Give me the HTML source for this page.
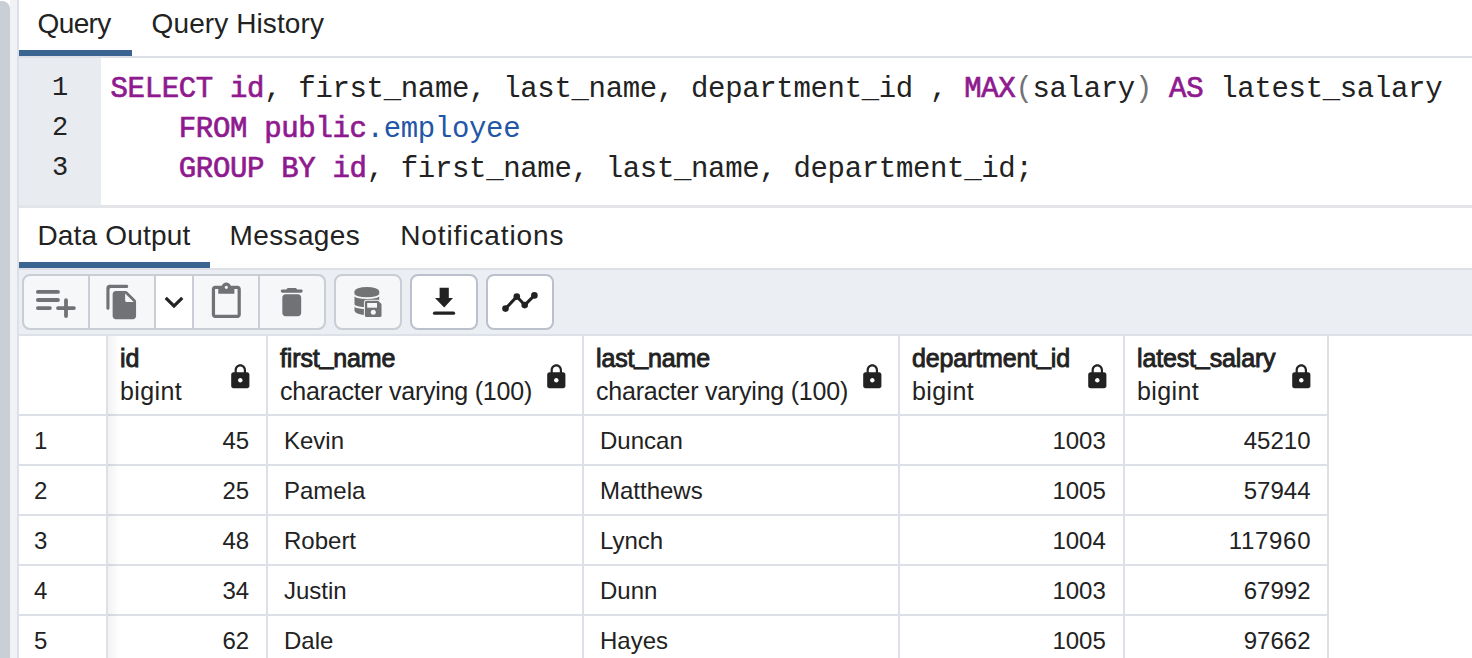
<!DOCTYPE html>
<html><head><meta charset="utf-8">
<style>
*{margin:0;padding:0;box-sizing:border-box}
html,body{width:1472px;height:658px;overflow:hidden;background:#fff;font-family:"Liberation Sans",sans-serif;color:#222}
.a{position:absolute}
.t{position:absolute;white-space:nowrap;line-height:1}
.ul{background:#3b6591;height:6px}
.bd{background:#dde0e6}
.code{font-family:"Liberation Mono",monospace;font-size:29px;letter-spacing:-0.33px;white-space:pre;line-height:1;position:absolute;color:#222}
.k{color:#8f1a8f;font-weight:normal;-webkit-text-stroke:0.7px #8f1a8f}
.v{color:#2356a6}
.p{color:#717276}
.ln{font-family:"Liberation Mono",monospace;font-size:27px;position:absolute;line-height:1;color:#222;text-align:right}
.tab{font-size:28px}
.h1{font-weight:normal;font-size:25px;letter-spacing:-0.15px;-webkit-text-stroke:0.9px #222}
.h2{font-size:25px}
.cell{font-size:24px}
.btn{position:absolute;top:274px;height:56px;border:2px solid #c8cdd6;background:#f6f7f9;border-radius:8px}
.btnd{position:absolute;top:276px;width:2px;height:52px;background:#c8cdd6}
</style></head><body>
<div class="a" style="left:0;top:1px;width:10px;height:700px;background:#c9ced7;border-top-right-radius:8px"></div>
<div class="a" style="left:10px;top:0;width:7px;height:658px;background:#f0f2f5"></div>
<div class="a" style="left:17px;top:0;width:2px;height:658px;background:#dde0e6"></div>
<div class="t tab" style="left:37.5px;top:10px;letter-spacing:-0.6px">Query</div>
<div class="t tab" style="left:151.6px;top:10px;letter-spacing:0.1px">Query History</div>
<div class="a ul" style="left:19px;top:50px;width:113px"></div>
<div class="a bd" style="left:19px;top:56px;width:1453px;height:2px"></div>
<div class="a" style="left:19px;top:58px;width:82px;height:147px;background:#e8ebf0"></div>
<div class="ln" style="right:1403.7px;top:75px">1</div>
<div class="ln" style="right:1403.7px;top:115px">2</div>
<div class="ln" style="right:1403.7px;top:155px">3</div>
<div class="code" style="left:110.5px;top:74.8px"><span class="k">SELECT</span> <span class="k">id</span>, first_name, last_name, department_id , <span class="k">MAX</span><span class="p">(</span>salary<span class="p">)</span> <span class="k">AS</span> latest_salary</div>
<div class="code" style="left:110.5px;top:114.8px">    <span class="k">FROM</span> <span class="k">public</span><span class="v">.employee</span></div>
<div class="code" style="left:110.5px;top:154.8px">    <span class="k">GROUP</span> <span class="k">BY</span> <span class="k">id</span>, first_name, last_name, department_id;</div>
<div class="a" style="left:19px;top:205px;width:1453px;height:3px;background:#e3e5e9"></div>
<div class="t tab" style="left:37.4px;top:222px;letter-spacing:0.2px">Data Output</div>
<div class="t tab" style="left:229.6px;top:222px;letter-spacing:0.35px">Messages</div>
<div class="t tab" style="left:400.2px;top:222px;letter-spacing:0.9px">Notifications</div>
<div class="a ul" style="left:19px;top:262px;width:191px"></div>
<div class="a bd" style="left:19px;top:268px;width:1453px;height:2px"></div>
<div class="a" style="left:19px;top:270px;width:1453px;height:64px;background:#ebeef3"></div>
<div class="a bd" style="left:19px;top:334px;width:1453px;height:2px"></div>
<div class="btn" style="left:22px;width:304px"></div>
<div class="a" style="left:156px;top:276px;width:36px;height:52px;background:#fff"></div>
<div class="btnd" style="left:88px"></div>
<div class="btnd" style="left:154px"></div>
<div class="btnd" style="left:192px"></div>
<div class="btnd" style="left:258px"></div>
<div class="btn" style="left:334px;width:68px"></div>
<div class="btn" style="left:410px;width:67.5px;background:#fff;border-color:#bac1cc"></div>
<div class="btn" style="left:486px;width:67.5px;background:#fff;border-color:#bac1cc"></div>
<div class="a bd" style="left:106px;top:336px;width:2px;height:330px"></div>
<div class="a bd" style="left:266px;top:336px;width:2px;height:330px"></div>
<div class="a bd" style="left:582px;top:336px;width:2px;height:330px"></div>
<div class="a bd" style="left:898px;top:336px;width:2px;height:330px"></div>
<div class="a bd" style="left:1123px;top:336px;width:2px;height:330px"></div>
<div class="a bd" style="left:1327px;top:336px;width:2px;height:330px"></div>
<div class="a bd" style="left:19px;top:414px;width:1310px;height:2px"></div>
<div class="a bd" style="left:19px;top:464px;width:1310px;height:2px"></div>
<div class="a bd" style="left:19px;top:514px;width:1310px;height:2px"></div>
<div class="a bd" style="left:19px;top:564px;width:1310px;height:2px"></div>
<div class="a bd" style="left:19px;top:614px;width:1310px;height:2px"></div>
<div class="a bd" style="left:19px;top:664px;width:1310px;height:2px"></div>
<div class="a" style="left:108px;top:336px;width:12px;height:330px;background:linear-gradient(to right,rgba(0,0,0,0.05),rgba(0,0,0,0))"></div>
<div class="t h1" style="left:120px;top:346px">id</div>
<div class="t h2" style="left:120px;top:379px;letter-spacing:0.4px">bigint</div>
<div class="t h1" style="left:280px;top:346px">first<span style="position:relative;top:-3.5px">_</span>name</div>
<div class="t h2" style="left:280px;top:379px;letter-spacing:-0.22px">character varying (100)</div>
<div class="t h1" style="left:596px;top:346px">last<span style="position:relative;top:-3.5px">_</span>name</div>
<div class="t h2" style="left:596px;top:379px;letter-spacing:-0.22px">character varying (100)</div>
<div class="t h1" style="left:912px;top:346px">department<span style="position:relative;top:-3.5px">_</span>id</div>
<div class="t h2" style="left:912px;top:379px;letter-spacing:0.4px">bigint</div>
<div class="t h1" style="left:1137px;top:346px">latest<span style="position:relative;top:-3.5px">_</span>salary</div>
<div class="t h2" style="left:1137px;top:379px;letter-spacing:0.4px">bigint</div>
<div class="t cell" style="left:34px;top:428.6px">1</div>
<div class="t cell" style="right:1222.8px;top:428.6px">45</div>
<div class="t cell" style="left:284px;top:428.6px">Kevin</div>
<div class="t cell" style="left:600px;top:428.6px">Duncan</div>
<div class="t cell" style="right:366.20000000000005px;top:428.6px">1003</div>
<div class="t cell" style="right:161.5px;top:428.6px;">45210</div>
<div class="t cell" style="left:34px;top:478.6px">2</div>
<div class="t cell" style="right:1222.8px;top:478.6px">25</div>
<div class="t cell" style="left:284px;top:478.6px">Pamela</div>
<div class="t cell" style="left:600px;top:478.6px">Matthews</div>
<div class="t cell" style="right:366.20000000000005px;top:478.6px">1005</div>
<div class="t cell" style="right:161.5px;top:478.6px;">57944</div>
<div class="t cell" style="left:34px;top:528.6px">3</div>
<div class="t cell" style="right:1222.8px;top:528.6px">48</div>
<div class="t cell" style="left:284px;top:528.6px">Robert</div>
<div class="t cell" style="left:600px;top:528.6px">Lynch</div>
<div class="t cell" style="right:366.20000000000005px;top:528.6px">1004</div>
<div class="t cell" style="right:160.8px;top:528.6px;letter-spacing:0.7px;">117960</div>
<div class="t cell" style="left:34px;top:578.6px">4</div>
<div class="t cell" style="right:1222.8px;top:578.6px">34</div>
<div class="t cell" style="left:284px;top:578.6px">Justin</div>
<div class="t cell" style="left:600px;top:578.6px">Dunn</div>
<div class="t cell" style="right:366.20000000000005px;top:578.6px">1003</div>
<div class="t cell" style="right:161.5px;top:578.6px;">67992</div>
<div class="t cell" style="left:34px;top:628.6px">5</div>
<div class="t cell" style="right:1222.8px;top:628.6px">62</div>
<div class="t cell" style="left:284px;top:628.6px">Dale</div>
<div class="t cell" style="left:600px;top:628.6px">Hayes</div>
<div class="t cell" style="right:366.20000000000005px;top:628.6px">1005</div>
<div class="t cell" style="right:161.5px;top:628.6px;">97662</div>
<svg class="a" style="left:0;top:0" width="1472" height="658" viewBox="0 0 1472 658">
<defs>
<path id="lock" d="M18 8h-1V6c0-2.76-2.24-5-5-5S7 3.24 7 6v2H6c-1.1 0-2 .9-2 2v10c0 1.1.9 2 2 2h12c1.1 0 2-.9 2-2V10c0-1.1-.9-2-2-2zm-6 9c-1.1 0-2-.9-2-2s.9-2 2-2 2 .9 2 2-.9 2-2 2zm3.1-9H8.9V6c0-1.71 1.39-3.1 3.1-3.1 1.71 0 3.1 1.39 3.1 3.1v2z"/>
</defs>
<g fill="#222">
<use href="#lock" transform="translate(226.65 363.16) scale(1.1375)"/>
<use href="#lock" transform="translate(542.65 363.16) scale(1.1375)"/>
<use href="#lock" transform="translate(858.65 363.16) scale(1.1375)"/>
<use href="#lock" transform="translate(1083.65 363.16) scale(1.1375)"/>
<use href="#lock" transform="translate(1287.65 363.16) scale(1.1375)"/>
</g>
<!-- playlist add -->
<g stroke="#717276" stroke-width="3.8" stroke-linecap="round" fill="none">
<path d="M37.9 291.9H58M37.9 300H58M37.9 308.1H49.9M58 308.1H73.9M66 300.2V316"/>
</g>
<!-- copy -->
<g fill="#717276" transform="translate(103.25 283.25) scale(1.5625)">
<path d="M15 1H4c-1.1 0-2 .9-2 2v13c0 .55.45 1 1 1s1-.45 1-1V4c0-.55.45-1 1-1h10c.55 0 1-.45 1-1s-.45-1-1-1zm.59 4.59 4.83 4.83c.37.37.58.88.58 1.41V21c0 1.1-.9 2-2 2H7.99C6.89 23 6 22.1 6 21l.01-14c0-1.1.89-2 1.99-2h6.17c.53 0 1.04.21 1.42.59zM15 12h4.5L14 6.5V11c0 .55.45 1 1 1z"/>
</g>
<!-- chevron -->
<g fill="#222" transform="translate(155.25 283.25) scale(1.5625)">
<path d="M16.59 8.59 12 13.17 7.41 8.59 6 10l6 6 6-6z"/>
</g>
<!-- paste -->
<g fill="#717276" transform="translate(207 282.5) scale(1.61)">
<path d="M19 2h-4.18C14.4.84 13.3 0 12 0S9.6.84 9.18 2H5c-1.1 0-2 .9-2 2v16c0 1.1.9 2 2 2h14c1.1 0 2-.9 2-2V4c0-1.1-.9-2-2-2zm-7 0c.55 0 1 .45 1 1s-.45 1-1 1-1-.45-1-1 .45-1 1-1zm7 18H5V4h2v3h10V4h2v16z"/>
</g>
<!-- delete -->
<g fill="#717276" transform="translate(272.9 283.2) scale(1.571)">
<path d="M6 19c0 1.1.9 2 2 2h8c1.1 0 2-.9 2-2V9c0-1.1-.9-2-2-2H8c-1.1 0-2 .9-2 2v10zM18 4h-2.5l-.71-.71c-.18-.18-.44-.29-.7-.29H9.91c-.26 0-.52.11-.7.29L8.5 4H6c-.55 0-1 .45-1 1s.45 1 1 1h12c.55 0 1-.45 1-1s-.45-1-1-1z"/>
</g>
<!-- db save -->
<g fill="#727375">
<ellipse cx="366.85" cy="291.85" rx="12.35" ry="4.95"/>
<path d="M354.5 291.85V310.2A12.35 4.95 0 0 0 379.2 310.2V291.85Z"/>
</g>
<g stroke="#f6f7f9" stroke-width="1.8" fill="none">
<path d="M354 294.6A12.85 3.6 0 0 0 379.7 294.6"/>
<path d="M354 304.8A12.85 3.3 0 0 0 379.7 304.8"/>
</g>
<path d="M364.9 302.2a1.5 1.5 0 0 1 1.5-1.5H378.1L381.5 304.1V315.5a1.5 1.5 0 0 1-1.5 1.5H366.4a1.5 1.5 0 0 1-1.5-1.5Z" fill="#727375" stroke="#f6f7f9" stroke-width="2" paint-order="stroke"/>
<rect x="367.2" y="303" width="9.8" height="4.7" fill="#f6f7f9"/>
<circle cx="373.3" cy="312.2" r="2.5" fill="#f6f7f9"/>
<!-- download -->
<g fill="#222">
<path d="M439.6 287.8H448.8V298H453L444.2 307.6L435 298H439.6Z"/>
<path d="M434.6 311.5H453.5a1.65 1.65 0 0 1 0 3.3H434.6a1.65 1.65 0 0 1 0-3.3Z"/>
</g>
<!-- graph -->
<g stroke="#222" stroke-width="3" fill="none" stroke-linejoin="round">
<path d="M505.5 308.6L516.8 296.6L524.7 305.1L534.4 295.4"/>
</g>
<g fill="#222">
<circle cx="505.5" cy="308.6" r="3.3"/><circle cx="516.8" cy="296.6" r="3.3"/><circle cx="524.7" cy="305.1" r="3.3"/><circle cx="534.4" cy="295.4" r="3.3"/>
</g>
</svg>

</body></html>
